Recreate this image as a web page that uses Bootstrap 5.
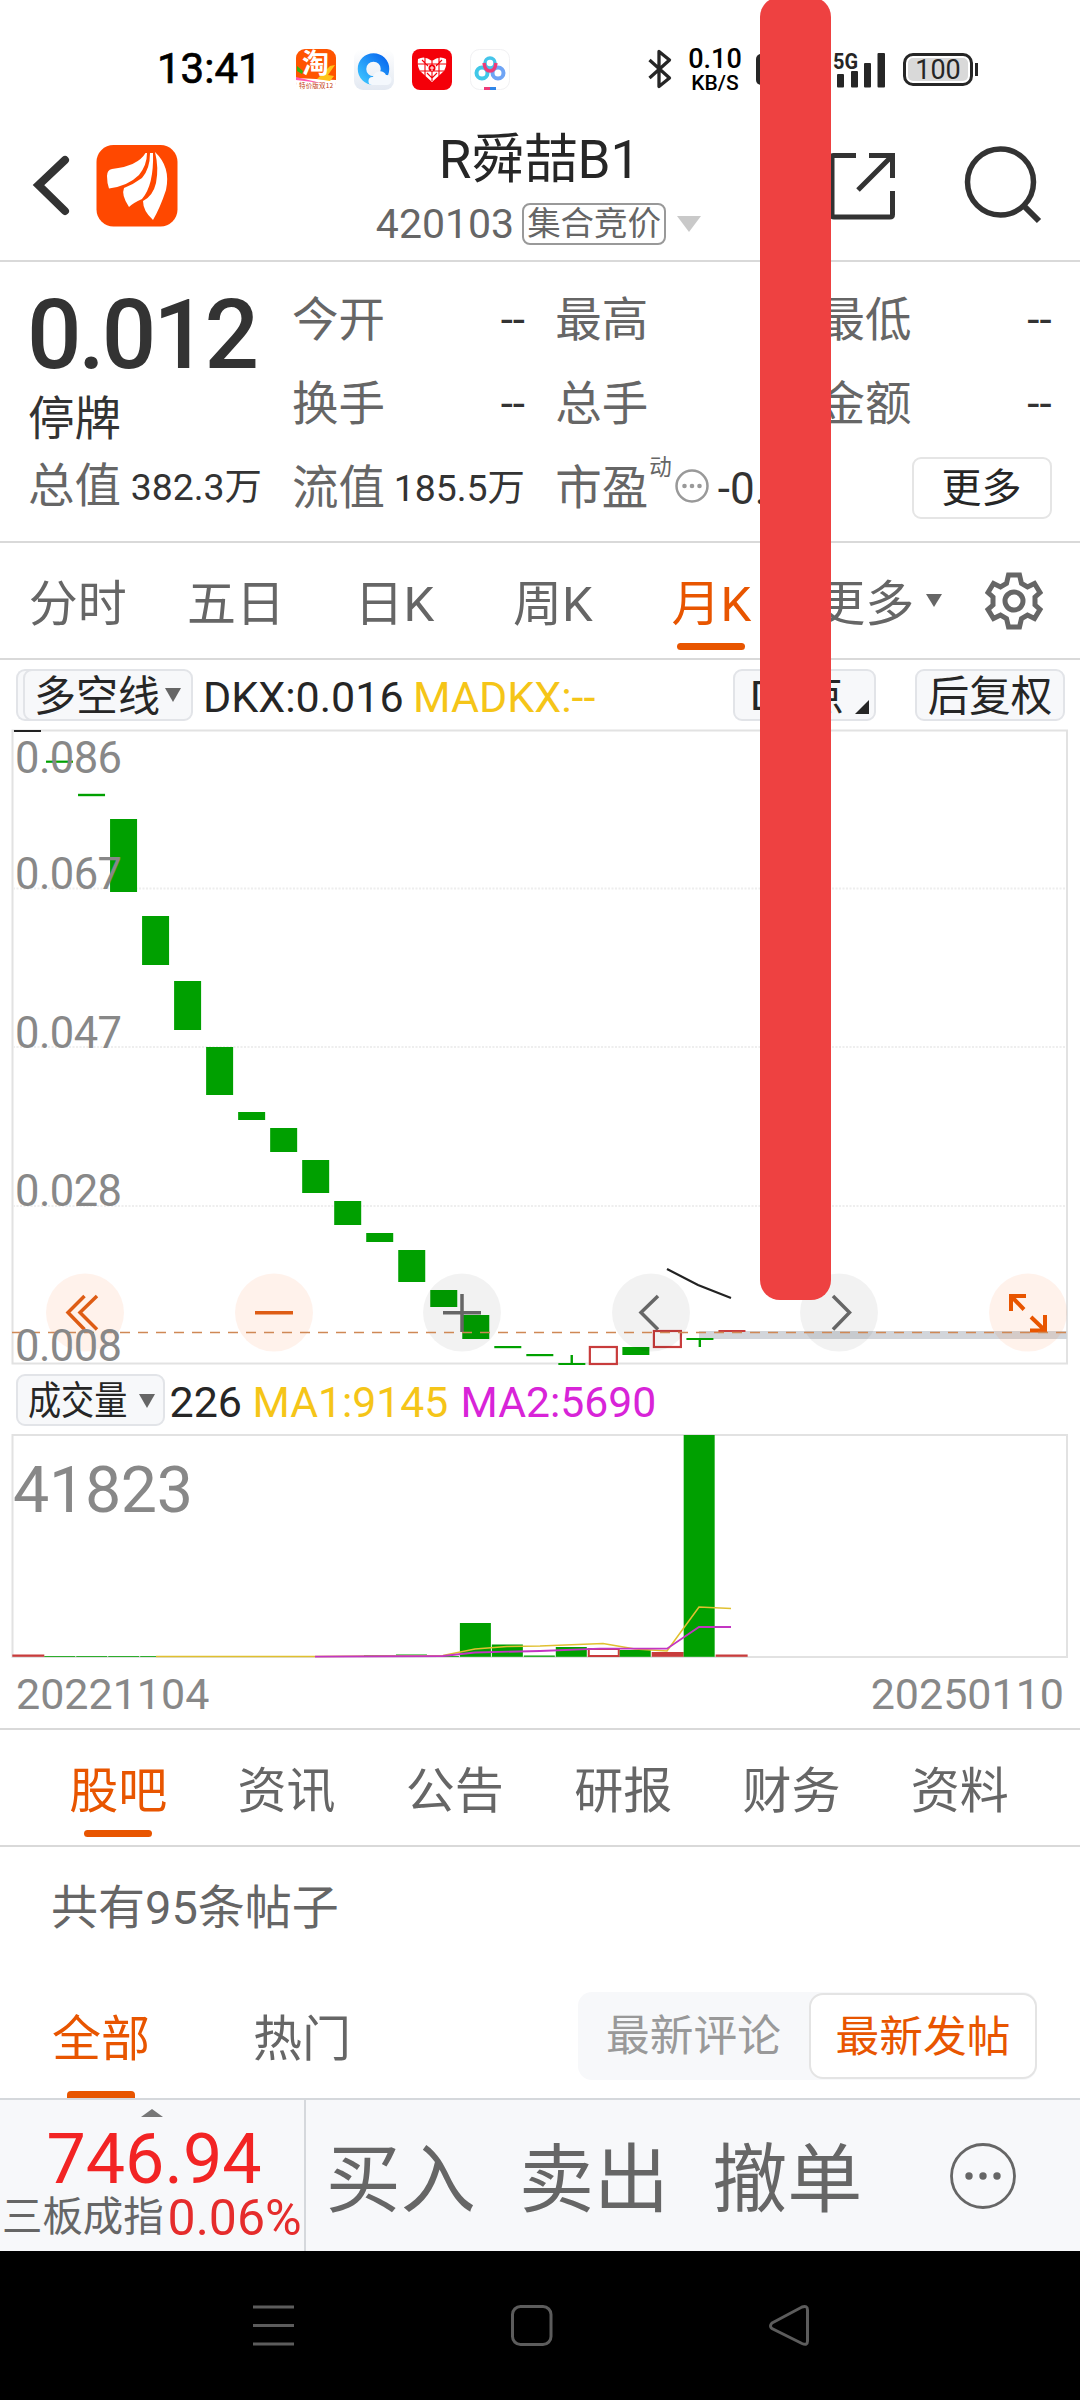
<!DOCTYPE html>
<html lang="zh-CN">
<head>
<meta charset="utf-8">
<meta name="viewport" content="width=device-width, initial-scale=1">
<title>R舜喆B1 420103</title>
<link href="https://cdn.jsdelivr.net/npm/bootstrap@5.3.0/dist/css/bootstrap.min.css" rel="stylesheet">
<style>
:root{--accent:#e85500;--ink:#333;--sub:#666;--line:#d9d9d9}
body{font-family:Roboto,"Noto Sans CJK SC",sans-serif;background:#fff;color:var(--ink);width:1080px;height:2400px;overflow:hidden;line-height:1;white-space:nowrap}
svg{display:block;flex:none;overflow:visible}
.phone{width:1080px;height:2400px}
.bar-status{height:100px;padding-top:38px}
.clock{font-size:42px;width:99px;margin-left:157px;color:#000;-webkit-text-stroke:.7px #000}
.app-icons{margin-left:40px;gap:18px}
.bt{margin-left:138px}
.netspeed{width:54px;margin-left:16px;color:#000;text-align:center;font-weight:500}
.netspeed div:first-child{font-size:27px;height:25px;line-height:25px}
.netspeed div:last-child{font-size:21px;height:20px;line-height:23px}
.sim{width:14px;height:31px;background:#262626;border-radius:5px 0 0 5px;margin-left:14px}
.signal{margin-left:62px}
.battery{width:70px;height:33px;border:3px solid #262626;border-radius:10px;padding:2px;margin-left:17px}
.battery span{display:block;background:#d9d9d9;border-radius:5px;height:23px;line-height:24px;font-size:27px;text-align:center;color:#262626}
.battery-tip{width:3px;height:13px;background:#262626;margin-left:2px}
.head{height:162px;border-bottom:2px solid var(--line)}
.head-side{width:300px;padding-top:11px}
.head-title{padding-top:30px}
.stock-name{font-size:53px;line-height:60px;color:#262626;margin-left:-1px}
.stock-code{height:46px;margin-top:11px;margin-left:-3px;color:var(--sub);font-size:41px}
.phase{border:2px solid #999;border-radius:8px;height:42px;line-height:38px;font-size:33.5px;width:144px;text-align:center;margin-left:8px}
.tri{width:0;height:0;border:solid transparent;border-bottom-width:0}
.quote{height:281px;border-bottom:2px solid var(--line);padding:16px 27px 0 28px}
.price{font-size:96px;font-weight:500;height:90px;line-height:92px;letter-spacing:-3.2px;padding-top:11px;margin-left:-1px}
.qgrid{display:grid;grid-template-columns:233px 233px 233px;column-gap:30.3px;grid-template-rows:84px 84px 84px}
.qlabel{font-size:46.5px;color:var(--sub)}
.qval{font-size:44px}
.qsmall{font-size:37.4px;padding-top:2px}
.more-btn{width:140px;height:62px;border:2px solid #e5e5e5;border-radius:9px;font-size:40px;padding:0;line-height:57px;color:#262626}
.tabs{height:117px;border-bottom:2px solid var(--line);font-size:49px;color:var(--sub)}
.tabs .cell,.ctabs .cell{position:relative;display:flex;align-items:center;justify-content:center}
.tabs .cell{width:158.4px;padding:7px 3px 0 0}
.sel{color:var(--accent)}
.sel::after{content:"";position:absolute;left:50%;margin-left:-34px;width:68px;height:7px;border-radius:4px;background:var(--accent);bottom:8px}
.tabs .sel::after{margin-left:-36px}
.ind{height:68px;font-size:43px;color:#262626}
.ind .tx{padding-top:6px}
.chip{background:#f7f8fa;border:2px solid #e2e4e8;border-radius:9px;height:52px;display:flex;align-items:center;color:#262626;margin-top:2px;padding-top:3px}
.chip-back{width:20px;border-right:0;border-radius:9px 0 0 9px}
.yel{color:#f5c518}.mag{color:#d824d8}
.squeeze{display:inline-block;transform:scaleX(.86);transform-origin:0 50%;width:100px}
.dates{height:70px;border-bottom:2px solid var(--line);font-size:43px;color:#888;padding:1px 16px 0}
.ctabs{height:117px;border-bottom:2px solid var(--line);padding:0 36px 0 34px;font-size:49px;color:var(--sub)}
.ctabs .cell{flex:1 1 0;padding-top:8px}
.posts{height:120px;padding-left:51px;font-size:47px;color:var(--sub)}
.filter{height:131px;padding-left:52px;padding-right:43px;font-size:49px;color:var(--sub)}
.filter .ft{position:relative;height:131px;display:flex;align-items:center;padding-top:13px}
.filter .sel::after{bottom:0;border-radius:4px 4px 0 0}
.seg{width:459px;height:88px;background:#f7f8fa;border-radius:14px;font-size:43.7px;margin-top:7px}
.seg span{text-align:center}
.seg .on{width:228px;height:86px;line-height:84px;border:2px solid #e4e4e4;border-radius:14px;background:#fff;color:var(--accent);margin:1px 0}
.seg .off{width:231px;line-height:88px;color:#999}
.trade{height:153px;background:#f7f8fa;border-top:2px solid #d5d8dc}
.idx{width:306px;border-right:2px solid #d5d8dc}
.idx-val{font-size:70px;line-height:72px;color:#f22424;margin:6px 0 0 4px}
.idx-row{font-size:40.4px;line-height:48px;color:var(--sub);margin-left:2px}
.idx-row b{font-weight:400;font-size:50px;color:#e52c2c}
.act{font-size:75px;color:var(--sub);width:193.3px;text-align:center;padding:9px 4px 0 0}
.sysnav{height:149px;background:#000}
.red-stroke{position:absolute;left:760px;top:-3px;width:71px;height:1303px;border-radius:20px;background:#ee4141;z-index:5}
</style>
</head>
<body>
<div class="phone position-relative d-flex flex-column overflow-hidden">

<div class="bar-status d-flex align-items-center">
  <div class="clock">13:41</div>
  <div class="app-icons d-flex">
    <svg width="40" height="41" viewBox="0 0 40 41"><rect width="40" height="41" rx="9" fill="#ff5400"/><path d="M0 29L40 31V33Q40 41 32 41H8Q0 41 0 33Z" fill="#fff"/><path d="M0 28L25 34L0 31Z" fill="#ff5ab0"/><path d="M1 17L7 22L6 25L1 22Z" fill="#2fb510"/><path d="M21 30L34 17L39 16L32 26L38 27L34 32Z" fill="#ffc21a"/><text x="6" y="24" font-size="27" font-weight="700" fill="#fff" font-family="Noto Sans CJK SC">淘</text><text x="3" y="39" font-size="6.500" fill="#c33b10" font-family="Noto Sans CJK SC" textLength="34">特价版双12</text></svg>
    <svg width="40" height="41" viewBox="0 0 40 41"><defs><linearGradient id="q1" x1="0" y1="1" x2="1" y2="0"><stop offset="0" stop-color="#3ac0ff"/><stop offset="1" stop-color="#0a6cf0"/></linearGradient><linearGradient id="q2" x1="0" y1="0" x2="0" y2="1"><stop offset="0" stop-color="#fff"/><stop offset="1" stop-color="#e3e9f2"/></linearGradient></defs><rect width="40" height="41" rx="9" fill="url(#q2)"/><circle cx="19.500" cy="20" r="11.500" fill="none" stroke="url(#q1)" stroke-width="8.500"/><path d="M18 36a4 4 0 0 1 1-8 7 7 0 0 1 13-2 5 5 0 0 1 1 10z" fill="#f4f8fd"/></svg>
    <svg width="40" height="41" viewBox="0 0 40 41"><rect width="40" height="41" rx="8" fill="#f40009"/><path d="M20 33L8 22Q5 17 6 10Q13 6 20 12Q27 6 34 10Q35 17 32 22Z" fill="#fff"/><path d="M13 8V27M20 12V32M27 8V27M6 15H34M8 22H32M10 11l6 6M24 17l6-6M15 24l5 5 5-5" stroke="#f40009" stroke-width="1.100" fill="none"/><circle cx="20" cy="19" r="3.500" fill="#f40009"/><path d="M18 19h4M20 17v5" stroke="#fff" stroke-width="1"/></svg>
    <svg width="40" height="41" viewBox="0 0 40 41"><rect x=".5" y=".5" width="39" height="40" rx="9" fill="#fff" stroke="#f1f1f3"/><circle cx="12" cy="24" r="5.500" fill="none" stroke="#41c8e8" stroke-width="4"/><circle cx="28" cy="24" r="5.500" fill="none" stroke="#6fa4f5" stroke-width="4"/><circle cx="20" cy="14" r="5" fill="none" stroke="#45c5ea" stroke-width="3.500"/><path d="M14 14q1 8 6 8t6-8" fill="none" stroke="#ee3b78" stroke-width="3.500"/><path d="M14 39.500h6" stroke="#ee3b78" stroke-width="3"/><path d="M20 39.500h6" stroke="#2f86e8" stroke-width="3"/></svg>
  </div>
  <svg class="bt" width="24" height="40" viewBox="0 0 24 40" fill="none" stroke="#262626" stroke-width="3.300" stroke-linejoin="round"><path d="M1.500 11L21.500 29L11 37.500V2.500L21.500 11L1.500 29"/></svg>
  <div class="netspeed"><div>0.10</div><div>KB/S</div></div>
  <div class="sim"></div>
  <svg class="signal" width="54" height="37" viewBox="832 49 54 37"><text x="833" y="66.500" font-size="22" font-weight="700" fill="#262626" textLength="25" lengthAdjust="spacingAndGlyphs">5G</text><g fill="#262626"><rect x="837" y="72" width="7" height="13.500" rx="1"/><rect x="851" y="69" width="7" height="16.500" rx="1"/><rect x="864" y="61" width="7" height="24.500" rx="1"/><rect x="877.500" y="51" width="7.500" height="34.500" rx="1"/></g></svg>
  <div class="battery"><span>100</span></div><div class="battery-tip"></div>
</div>

<header class="head d-flex">
  <div class="head-side d-flex align-items-center">
    <svg width="178" height="84" viewBox="0 144 178 84"><path d="M65 160L38.500 185L65 211" fill="none" stroke="#333" stroke-width="8" stroke-linecap="round" stroke-linejoin="miter"/><rect x="96.500" y="145" width="81" height="81.500" rx="17" fill="#ff4800"/><path d="M145.500 153Q138 166 112 169Q107 170 107 176Q107 183 109 188.500Q128 186 139 175Q147 165 147 153Z" fill="#fff"/><path d="M150 153Q150 169 142 178Q134 184 124 188Q121 195 129 207Q133 203 142 199Q154 185 153 153Z" fill="#fff"/><path d="M155 152Q159 168 156 183Q153 196 143 201Q143 211 153 220Q160 208 166 190Q171 167 155 152Z" fill="#fff"/></svg>
  </div>
  <div class="head-title flex-grow-1 d-flex flex-column align-items-center">
    <div class="stock-name">R舜喆B1</div>
    <div class="stock-code d-flex align-items-center"><span>420103</span><span class="phase">集合竞价</span><i class="tri" style="border-width:16px 12.500px 0;border-top-color:#c9c9c9;margin-left:11px"></i></div>
  </div>
  <div class="head-side d-flex align-items-center justify-content-end">
    <svg width="256" height="84" viewBox="824 144 256 84" fill="none" stroke="#333"><path d="M856 155.500H833.500Q832 155.500 832 157V215Q832 217 834 217H890Q892.500 217 892.500 214.500V191M869 155.500H892.500V178M892 156L858 190" stroke-width="5"/><circle cx="1000.500" cy="182" r="33" stroke-width="5.500"/><path d="M1024 206L1039 221" stroke-width="6"/></svg>
  </div>
</header>

<section class="quote d-flex">
  <div style="width:264px">
    <div class="price">0.012</div>
    <div class="qlabel" style="color:#333;height:84px;padding-top:28px">停牌</div>
    <div class="d-flex align-items-center justify-content-between" style="width:234px;height:71px;margin-top:-1px"><span class="qlabel">总值</span><span class="qsmall">382.3万</span></div>
  </div>
  <div class="qgrid">
    <div class="d-flex align-items-center justify-content-between"><span class="qlabel">今开</span><span class="qval">--</span></div>
    <div class="d-flex align-items-center justify-content-between"><span class="qlabel">最高</span><span class="qval">--</span></div>
    <div class="d-flex align-items-center justify-content-between"><span class="qlabel">最低</span><span class="qval">--</span></div>
    <div class="d-flex align-items-center justify-content-between"><span class="qlabel">换手</span><span class="qval">--</span></div>
    <div class="d-flex align-items-center justify-content-between"><span class="qlabel">总手</span><span class="qval">--</span></div>
    <div class="d-flex align-items-center justify-content-between"><span class="qlabel">金额</span><span class="qval">--</span></div>
    <div class="d-flex align-items-center justify-content-between"><span class="qlabel">流值</span><span class="qsmall">185.5万</span></div>
    <div class="d-flex align-items-center"><span class="qlabel">市盈</span><span style="font-size:22.500px;color:#666;margin:-42px 0 0 1px">动</span>
      <svg style="margin:-5px 0 0 2px" width="36" height="36" viewBox="0 0 36 36"><circle cx="18" cy="18" r="15.500" fill="none" stroke="#999" stroke-width="2.500"/><g fill="#999"><circle cx="10.500" cy="18" r="2.300"/><circle cx="18" cy="18" r="2.300"/><circle cx="25.500" cy="18" r="2.300"/></g></svg>
      <span class="qval" style="margin:2px 0 0 8px">-0.0</span></div>
    <div class="d-flex align-items-center justify-content-end"><button class="btn more-btn" type="button">更多</button></div>
  </div>
</section>

<nav class="tabs d-flex">
  <div class="cell">分时</div><div class="cell">五日</div><div class="cell">日K</div><div class="cell">周K</div><div class="cell sel">月K</div>
  <div class="cell" style="padding-left:19px">更多<i class="tri" style="border-width:13px 8.500px 0;border-top-color:#666;margin:-7px 0 0 12px"></i></div>
  <div class="d-flex align-items-center" style="margin-left:34px"><svg width="60" height="62" viewBox="-30 -31 60 62" fill="none" stroke="#666" stroke-width="5" stroke-linejoin="miter"><path d="M-5.500 -26H5.500L7.500 -17.500L13.500 -14L20.500 -17.500L26 -8.500L21 -4V4L26 8.500L20.500 17.500L13.500 14L7.500 17.500L5.500 26H-5.500L-7.500 17.500L-13.500 14L-20.500 17.500L-26 8.500L-21 4V-4L-26 -8.500L-20.500 -17.500L-13.500 -14L-7.500 -17.500Z"/><circle r="9"/></svg></div>
</nav>

<div class="ind d-flex align-items-center">
  <div class="chip chip-back" style="margin-left:16px"></div>
  <div class="chip" style="width:170px;margin-left:-13px;padding-left:9px;font-size:42px">多空线<i class="tri" style="border-width:14px 8.500px 0;border-top-color:#666;margin:-4px 0 0 5px"></i></div>
  <span class="tx" style="margin-left:10px;width:210px">DKX:0.016</span><span class="yel tx">MADKX:--</span>
  <div class="chip" style="width:143px;position:relative;margin-left:auto;padding-left:15px;font-size:41px">DK点<i style="position:absolute;right:5px;bottom:5px;border:7px solid;border-color:transparent #262626 #262626 transparent"></i></div>
  <div class="chip justify-content-center" style="width:150px;margin-left:39px;margin-right:15px;font-size:41.500px">后复权</div>
</div>

<svg id="kchart" width="1080" height="638" viewBox="0 728 1080 638">
  <rect x="12.500" y="730.500" width="1054.500" height="633" fill="none" stroke="#e2e2e2" stroke-width="2"/>
  <path d="M13 888.500H1066M13 1047H1066M13 1206H1066" stroke="#eee" stroke-width="2" stroke-dasharray="2 1.500"/>
  <rect x="699" y="1331" width="368" height="8" fill="#d2d5da"/>
  <g id="candles"></g>
  <path d="M667 1269L698 1285L731 1298" fill="none" stroke="#222" stroke-width="2.200"/>
  <g font-size="43.500" fill="#888"><text x="15" y="773" textLength="107">0.086</text><text x="15" y="889" textLength="107">0.067</text><text x="15" y="1048" textLength="107">0.047</text><text x="15" y="1206" textLength="107">0.028</text></g>
  <g id="buttons" fill-opacity=".08"><g fill="#ff5500"><circle cx="85" cy="1312.600" r="39"/><circle cx="274" cy="1312.600" r="39"/><circle cx="1028" cy="1312.600" r="39"/></g><g fill="#000" fill-opacity=".05"><circle cx="462" cy="1312.600" r="39"/><circle cx="651" cy="1312.600" r="39"/><circle cx="839" cy="1312.600" r="39"/></g></g>
  <g fill="none" stroke="#de5c14" stroke-width="3.500"><path d="M84.500 1296L68 1312.500L84.500 1329.500M97 1296L80 1312.500L97 1329.500M255 1312.700H293"/></g>
  <g fill="none" stroke="#666" stroke-width="3.500"><path d="M443 1312.700H481M462 1294V1332M658 1296L641 1312.500L658 1329.500M833 1296L849.500 1312.500L833 1329.500"/></g>
  <path d="M1026 1296H1011V1311M1011.500 1296.500L1024 1309.500M1031 1317L1044 1329.500M1045 1315V1330.500H1030" fill="none" stroke="#e85500" stroke-width="4"/>
  <path d="M12 1332.500H1066" stroke="#cf8855" stroke-width="1.500" stroke-dasharray="10 8"/>
  <text x="15" y="1361" font-size="43.500" fill="#888" textLength="107">0.008</text>
</svg>

<div class="ind d-flex align-items-center" style="height:66px">
  <div class="chip" style="width:148.500px;margin-left:16px;padding-left:10px;font-size:38.500px"><span class="squeeze">成交量</span><i class="tri" style="border-width:14px 8px 0;border-top-color:#666;margin:-2px 0 0 11px"></i></div>
  <span class="tx" style="margin-left:5px;width:83px">226</span><span class="yel tx" style="width:208px;font-size:42.700px">MA1:9145</span><span class="mag tx" style="font-size:42.700px">MA2:5690</span>
</div>

<svg id="vchart" width="1080" height="228" viewBox="0 1432 1080 228">
  <rect x="12.500" y="1435" width="1054.500" height="222" fill="none" stroke="#e2e2e2" stroke-width="2"/>
  <text x="13" y="1512" font-size="64.500" fill="#888" textLength="180">41823</text>
  <g id="vols"></g>
  <path d="M156 1656.500H315L443 1655.500L475 1649L507 1646.500L540 1646L603 1643.500L635 1649L667 1651L699 1607L731 1608.500" fill="none" stroke="#e0c030" stroke-width="1.600"/>
  <path d="M315 1656.700L443 1656L475 1652.500L540 1651L600 1648.700H667L699 1627H731" fill="none" stroke="#c335c3" stroke-width="1.800"/>
</svg>

<div class="dates d-flex align-items-center justify-content-between"><span>20221104</span><span>20250110</span></div>

<nav class="ctabs d-flex"><div class="cell sel">股吧</div><div class="cell">资讯</div><div class="cell">公告</div><div class="cell">研报</div><div class="cell">财务</div><div class="cell">资料</div></nav>

<div class="posts d-flex align-items-center">共有95条帖子</div>

<div class="filter d-flex">
  <div class="ft sel">全部</div><div class="ft" style="margin-left:103px">热门</div>
  <div class="d-flex align-items-center ms-auto"><div class="seg d-flex"><span class="off">最新评论</span><span class="on">最新发帖</span></div></div>
</div>

<footer class="trade d-flex">
  <div class="idx d-flex flex-column align-items-center">
    <i class="tri" style="border-width:0 11.500px 8px;border-bottom-color:#777;margin-top:9px"></i>
    <div class="idx-val">746.94</div>
    <div class="idx-row d-flex align-items-center align-self-start" style="margin-top:-1px"><span>三板成指</span><b style="margin-left:4px">0.06%</b></div>
  </div>
  <div class="d-flex align-items-center"><div class="act">买入</div><div class="act">卖出</div><div class="act">撤单</div></div>
  <div class="flex-grow-1 d-flex align-items-center justify-content-center"><svg width="68" height="68" viewBox="-34 -34 68 68"><circle r="31.500" fill="none" stroke="#666" stroke-width="2.800"/><g fill="#666"><circle cx="-14" r="3.700"/><circle r="3.700"/><circle cx="14" r="3.700"/></g></svg></div>
</footer>

<div class="sysnav"><svg width="1080" height="149" viewBox="0 2251 1080 149" fill="none" stroke="#5c5c5c" stroke-width="3"><path d="M253 2307H294M253 2325.500H294M253 2344H294"/><rect x="512.500" y="2306.500" width="38.500" height="38" rx="8"/><path d="M772 2323L802 2307Q807.500 2305 807.500 2310V2341Q807.500 2346 802 2343.500L772 2328.500Q769 2326 772 2323Z"/></svg></div>

<div class="red-stroke"></div>
</div>

<script>
const G='#00a000',R='#c83c3c';
// monthly candles: [type, top, bottom, wickTop, wickBottom]
const k=[['k',730,732],['g',760.6,762.8],['g',793.8,796.2],['g',819,892],['g',916,965],['g',981,1030],['g',1047,1095],['g',1112,1120],['g',1128,1152],['g',1160,1193],['g',1201,1225],['g',1233,1242],['g',1250,1282],['g',1290,1307],['g',1315,1339],['g',1346,1348.2],['g',1354,1356.2],['g',1363,1365,1355,1364],['r',1347,1364],['g',1347,1355],['r',1331,1347],['g',1338,1340,1339,1347],['R',1330,1332]];
document.getElementById('candles').innerHTML=k.map(([t,a,b,w,v],i)=>{
  const x=14+i*32.02,c=t=='g'?G:t=='k'?'#222':R;
  return (t=='r'?`<rect x="${x+.5-1}" y="${a}" width="27" height="${b-a}" fill="#fff" fill-opacity=".6" stroke="${c}" stroke-width="2.2"/>`:`<rect x="${x}" y="${a}" width="27" height="${b-a}" fill="${c}"/>`)+(w?`<rect x="${x+12.2}" y="${w}" width="2.4" height="${v-w}" fill="${c}"/>`:'');
}).join('');
// monthly volumes: [type, top]
const v=[['R',1654.5],['g',1656],['g',1656],['g',1656],['g',1656],['g',1656.4],['g',1656.4],['g',1656.4],['g',1656.4],['g',1656.4],['g',1656.4],['g',1655.2],['g',1654.5],['g',1656],['g',1623],['g',1644.5],['g',1655.5],['g',1647],['r',1649],['g',1650],['R',1652],['g',1435],['R',1654.5]];
document.getElementById('vols').innerHTML=v.map(([t,a],i)=>{
  const x=12.3+i*31.97;
  return t=='r'?`<rect x="${x+1}" y="${a}" width="30" height="${1656-a}" fill="#fff" stroke="${R}" stroke-width="2"/>`:`<rect x="${x}" y="${a}" width="${t=='R'?32:31}" height="${1656.8-a}" fill="${t=='R'?R:G}"/>`;
}).join('');
</script>
<script src="https://cdn.jsdelivr.net/npm/bootstrap@5.3.0/dist/js/bootstrap.bundle.min.js"></script>
</body>
</html>
